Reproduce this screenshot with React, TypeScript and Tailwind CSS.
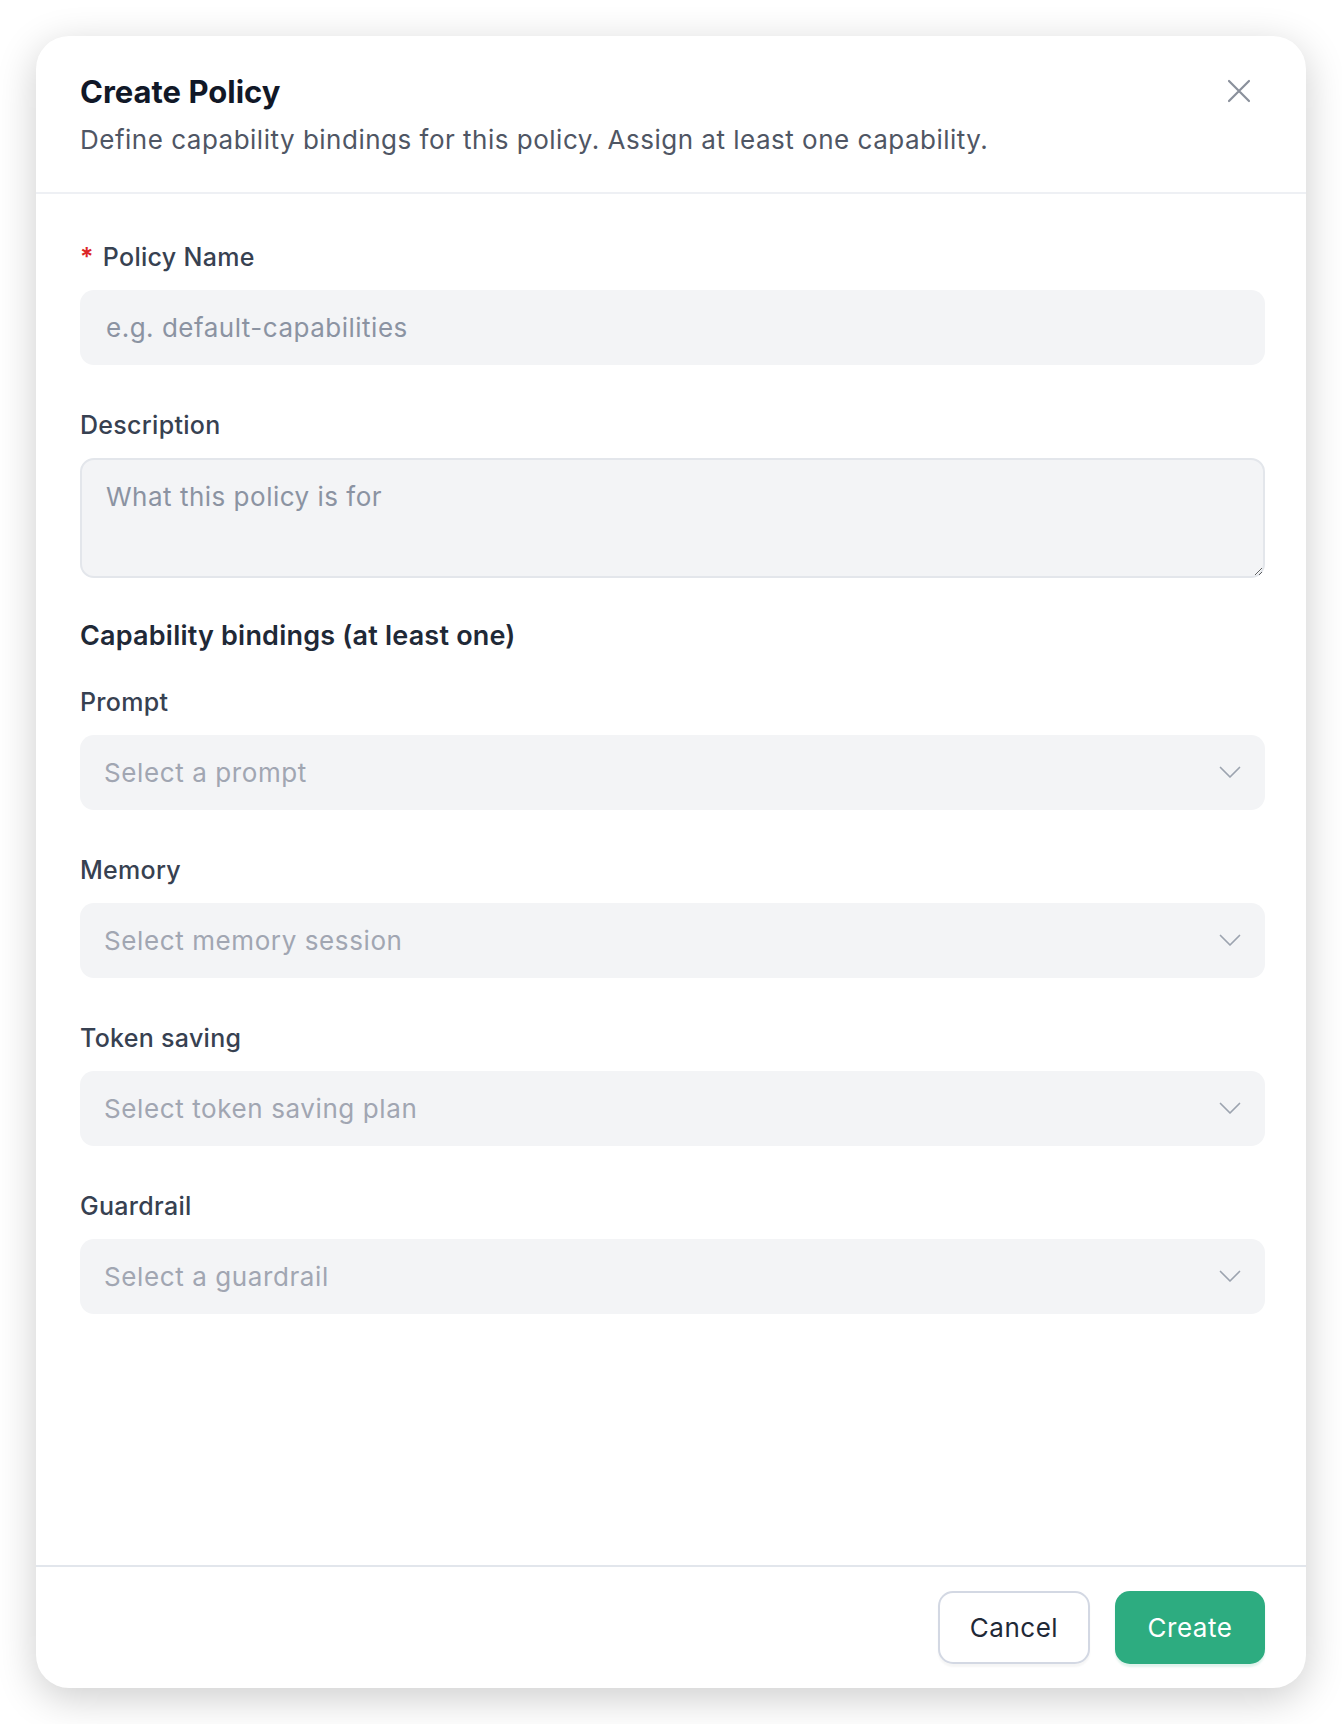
import { useState } from "react";

const font = { fontFamily: "Inter, 'Noto Sans', sans-serif" };

function Chevron() {
  return (
    <svg width="22" height="13" viewBox="0 0 22 13" fill="none" className="shrink-0">
      <path d="M1.5 1.5 L11 11 L20.5 1.5" stroke="#9ca3af" strokeWidth="1.7" strokeLinecap="round" strokeLinejoin="round" />
    </svg>
  );
}

function SelectField({ label, placeholder }: { label: string; placeholder: string }) {
  return (
    <div className="flex flex-col">
      <label className="text-[25px] leading-[32px] font-medium tracking-[0.3px] text-[#374151]">{label}</label>
      <button
        type="button"
        className="mt-[17px] flex h-[75px] w-full items-center justify-between rounded-[14px] bg-[#f3f4f6] pl-[24px] pr-[24px] text-left"
      >
        <span className="text-[26px] tracking-[0.6px] text-[#a1a6b2]">{placeholder}</span>
        <Chevron />
      </button>
    </div>
  );
}

export default function App() {
  const [name, setName] = useState("");
  const [desc, setDesc] = useState("");

  return (
    <div className="min-h-[1724px] w-full bg-white p-[36px]" style={font}>
      <div className="flex h-[1652px] w-full flex-col overflow-hidden rounded-[33px] bg-white shadow-[0_10px_40px_rgba(0,0,0,0.2)]">
        {/* header */}
        <div className="relative border-b-2 border-[#eef0f4] px-[44px] pt-[37px] pb-[35px]">
          <h2 className="text-[31px] leading-[38px] font-bold text-[#111827]">Create Policy</h2>
          <p className="mt-[12px] text-[26px] leading-[34px] tracking-[0.5px] text-[#4f5664]">
            Define capability bindings for this policy. Assign at least one capability.
          </p>
          <button type="button" className="absolute right-[55px] top-[43px] text-[#8a909b]">
            <svg width="24" height="24" viewBox="0 0 24 24" fill="none">
              <path d="M2 2 L22 22 M22 2 L2 22" stroke="currentColor" strokeWidth="2.2" strokeLinecap="round" />
            </svg>
          </button>
        </div>

        {/* body */}
        <div className="flex flex-1 flex-col pl-[44px] pr-[41px] pt-[47px]">
          <div className="flex flex-col">
            <label className="flex items-center gap-[9px] text-[25px] leading-[32px] font-medium tracking-[0.3px] text-[#374151]">
              <span className="font-semibold text-[#dc2626]">*</span>
              Policy Name
            </label>
            <input
              value={name}
              onChange={(e) => setName(e.target.value)}
              placeholder="e.g. default-capabilities"
              className="mt-[17px] h-[75px] w-full rounded-[14px] bg-[#f3f4f6] px-[26px] text-[26px] tracking-[0.5px] text-[#111827] outline-none placeholder:text-[#8b93a2]"
            />
          </div>

          <div className="mt-[44px] flex flex-col">
            <label className="text-[25px] leading-[32px] font-medium tracking-[0.3px] text-[#374151]">Description</label>
            <textarea
              value={desc}
              onChange={(e) => setDesc(e.target.value)}
              placeholder="What this policy is for"
              className="mt-[17px] h-[120px] w-full rounded-[14px] border-2 border-[#e3e6eb] bg-[#f3f4f6] px-[24px] pt-[20px] pb-[10px] text-[26px] leading-[34px] tracking-[0.5px] text-[#111827] outline-none placeholder:text-[#8b93a2]"
            />
          </div>

          <h3 className="mt-[40px] text-[27px] leading-[36px] font-semibold tracking-[0.2px] text-[#1f2937]">
            Capability bindings (at least one)
          </h3>

          <div className="mt-[32px] flex flex-col gap-[44px]">
            <SelectField label="Prompt" placeholder="Select a prompt" />
            <SelectField label="Memory" placeholder="Select memory session" />
            <SelectField label="Token saving" placeholder="Select token saving plan" />
            <SelectField label="Guardrail" placeholder="Select a guardrail" />
          </div>
        </div>

        {/* footer */}
        <div className="flex h-[123px] items-center justify-end gap-[25px] border-t-2 border-[#e2e6ec] pr-[41px]">
          <button
            type="button"
            className="h-[73px] w-[152px] rounded-[15px] border-2 border-[#d3d8e3] bg-white text-[26px] tracking-[0.5px] text-[#1f2937] shadow-[0_3px_2px_rgba(0,0,0,0.04)]"
          >
            Cancel
          </button>
          <button
            type="button"
            className="h-[73px] w-[150px] rounded-[15px] bg-[#2dac80] text-[26px] tracking-[0.5px] text-white shadow-[0_3px_2px_rgba(45,172,128,0.15)]"
          >
            Create
          </button>
        </div>
      </div>
    </div>
  );
}
